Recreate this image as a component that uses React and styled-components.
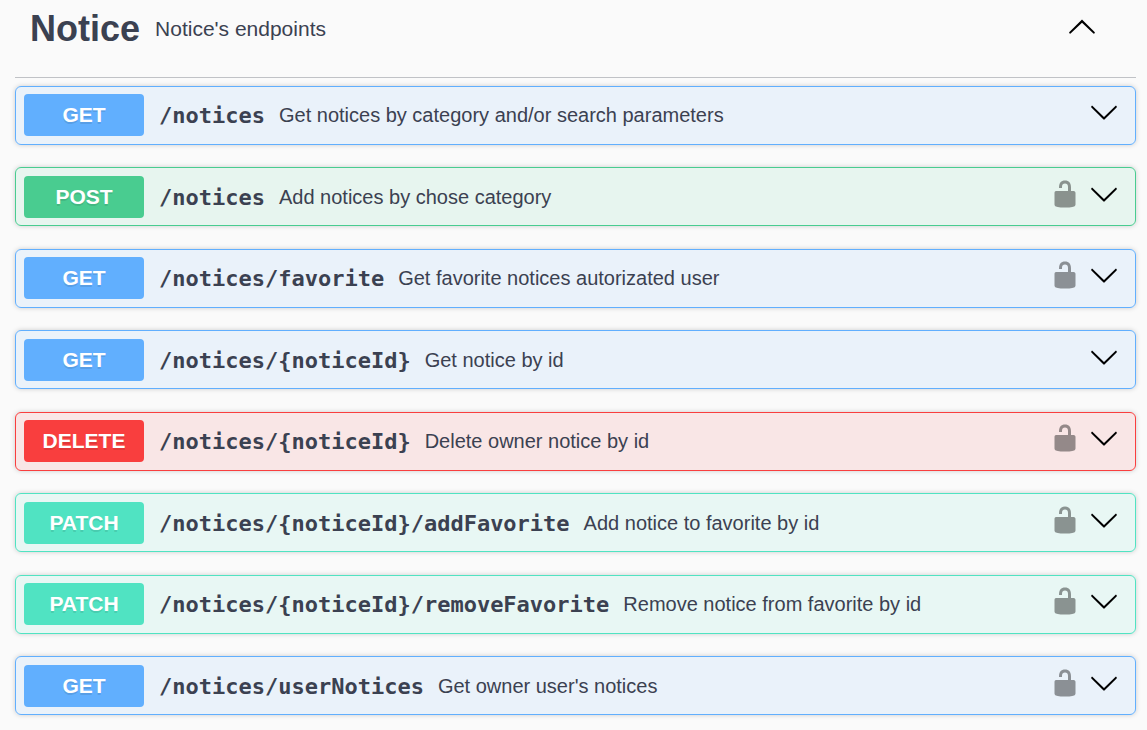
import React from "react";
import styled, { createGlobalStyle } from "styled-components";

const METHOD_COLORS = {
  GET: { solid: "#61affe", tint: "rgba(97, 175, 254, 0.1)" },
  POST: { solid: "#49cc90", tint: "rgba(73, 204, 144, 0.1)" },
  DELETE: { solid: "#f93e3e", tint: "rgba(249, 62, 62, 0.1)" },
  PATCH: { solid: "#50e3c2", tint: "rgba(80, 227, 194, 0.1)" },
};

const OPERATIONS = [
  { method: "GET", path: "/notices", summary: "Get notices by category and/or search parameters", secured: false },
  { method: "POST", path: "/notices", summary: "Add notices by chose category", secured: true },
  { method: "GET", path: "/notices/favorite", summary: "Get favorite notices autorizated user", secured: true },
  { method: "GET", path: "/notices/{noticeId}", summary: "Get notice by id", secured: false },
  { method: "DELETE", path: "/notices/{noticeId}", summary: "Delete owner notice by id", secured: true },
  { method: "PATCH", path: "/notices/{noticeId}/addFavorite", summary: "Add notice to favorite by id", secured: true },
  { method: "PATCH", path: "/notices/{noticeId}/removeFavorite", summary: "Remove notice from favorite by id", secured: true },
  { method: "GET", path: "/notices/userNotices", summary: "Get owner user's notices", secured: true },
];

const GlobalStyle = createGlobalStyle`
  * { box-sizing: border-box; }
  body {
    margin: 0;
    background: #fafafa;
    color: #3b4151;
    font-family: "Liberation Sans", Arial, sans-serif;
  }
`;

const Section = styled.section`
  padding: 0 11px 15px 15px;
`;

const SectionHeader = styled.header`
  display: flex;
  align-items: center;
  padding: 8px 39px 27px 15px;
  border-bottom: 1px solid rgba(59, 65, 81, 0.3);
`;

const SectionTitle = styled.h2`
  margin: 0;
  font-size: 36px;
  line-height: 42px;
  font-weight: 700;
`;

const SectionDescription = styled.p`
  flex: 1;
  margin: 0;
  padding: 0 15px;
  font-size: 21px;
  line-height: 24px;
`;

const IconButton = styled.button`
  display: block;
  margin: 0;
  padding: 0 0 6px;
  border: 0;
  background: none;
  color: #000;
  cursor: pointer;

  svg {
    display: block;
    width: 30px;
    height: 30px;
    fill: currentColor;
  }
`;

const LockButton = styled(IconButton)`
  opacity: 0.4;
`;

const OperationList = styled.div`
  padding-top: 8px;
`;

const Operation = styled.article`
  display: flex;
  align-items: center;
  gap: 9px;
  margin-bottom: 22px;
  padding: 7px 16px 8px 8px;
  border: 1px solid ${({ $method }) => METHOD_COLORS[$method].solid};
  border-radius: 6px;
  background: ${({ $method }) => METHOD_COLORS[$method].tint};
  box-shadow: 0 0 5px rgba(0, 0, 0, 0.19);

  &:nth-child(even) {
    margin-bottom: 23px;
    padding-top: 8px;
    padding-bottom: 7px;
  }

  &:last-child {
    margin-bottom: 0;
  }
`;

const SummaryButton = styled.button`
  display: flex;
  flex: 1;
  align-items: center;
  min-width: 0;
  margin: 0;
  padding: 0;
  border: 0;
  background: none;
  color: inherit;
  font-family: inherit;
  text-align: left;
  cursor: pointer;
`;

const MethodBadge = styled.span`
  flex: none;
  width: 120px;
  border-radius: 4px;
  background: ${({ $method }) => METHOD_COLORS[$method].solid};
  color: #fff;
  font-size: 21px;
  line-height: 42px;
  font-weight: 700;
  text-align: center;
  text-shadow: 0 2px 0 rgba(0, 0, 0, 0.1);
`;

const Path = styled.span`
  padding: 2px 14px 0 15px;
  font-family: Consolas, "DejaVu Sans Mono", monospace;
  font-size: 22px;
  line-height: 26px;
  font-weight: 700;
  white-space: nowrap;
`;

const Summary = styled.span`
  flex: 1;
  font-size: 20px;
  line-height: 24px;
`;

const ChevronUp = () => (
  <svg viewBox="0 0 20 20" aria-hidden="true">
    <path d="M17.418 14.908c.272.268.709.268.979 0s.271-.701 0-.969l-7.908-7.836c-.27-.268-.707-.268-.979 0l-7.908 7.836c-.27.268-.27.701 0 .969.271.268.709.268.979 0L10 7.767l7.418 7.141z" />
  </svg>
);

const ChevronDown = () => (
  <svg viewBox="0 0 20 20" aria-hidden="true">
    <path d="M17.418 6.109c.272-.268.709-.268.979 0s.271.701 0 .969l-7.908 7.83c-.27.268-.707.268-.979 0l-7.908-7.83c-.27-.268-.27-.701 0-.969.271-.268.709-.268.979 0L10 13.25l7.418-7.141z" />
  </svg>
);

const OpenLock = () => (
  <svg viewBox="0 0 20 20" aria-hidden="true">
    <path d="M15.8 8H14V5.6C14 2.703 12.665 1 10 1 7.334 1 6 2.703 6 5.6V6h2v-.801C8 3.754 8.797 3 10 3c1.203 0 2 .754 2 2.199V8H4c-.553 0-1 .646-1 1.199V17c0 .549.428 1.139.951 1.307l1.197.387C5.672 18.861 6.55 19 7.1 19h5.8c.549 0 1.428-.139 1.951-.307l1.196-.387c.524-.167.953-.757.953-1.306V9.199C17 8.646 16.352 8 15.8 8z" />
  </svg>
);

export default function App() {
  return (
    <>
      <GlobalStyle />
      <Section>
        <SectionHeader>
          <SectionTitle>Notice</SectionTitle>
          <SectionDescription>Notice's endpoints</SectionDescription>
          <IconButton type="button" aria-label="Collapse section" aria-expanded="true">
            <ChevronUp />
          </IconButton>
        </SectionHeader>
        <OperationList>
          {OPERATIONS.map(({ method, path, summary, secured }) => (
            <Operation key={method + path} $method={method}>
              <SummaryButton type="button">
                <MethodBadge $method={method}>{method}</MethodBadge>
                <Path>{path}</Path>
                <Summary>{summary}</Summary>
              </SummaryButton>
              {secured && (
                <LockButton type="button" aria-label="Authorize">
                  <OpenLock />
                </LockButton>
              )}
              <IconButton type="button" aria-label="Expand operation" aria-expanded="false">
                <ChevronDown />
              </IconButton>
            </Operation>
          ))}
        </OperationList>
      </Section>
    </>
  );
}
